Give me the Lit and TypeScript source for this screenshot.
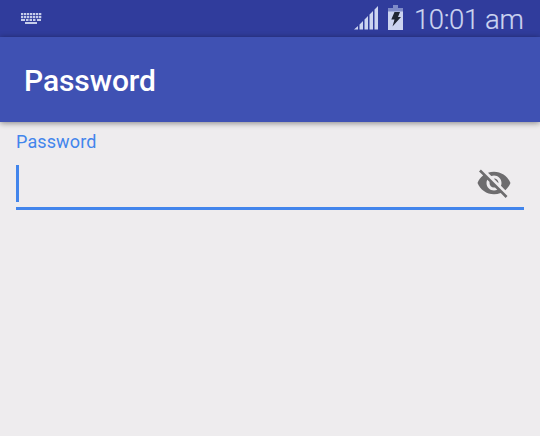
import { LitElement, html, css, svg } from "lit";
import { customElement } from "lit/decorators.js";

const keyRows = [
  { y: 0, keys: [0, 3, 6, 9, 12, 15, 18] },
  { y: 3, keys: [0, 3, 6, 9, 12, 15, 18] },
];

@customElement("status-bar")
class StatusBar extends LitElement {
  static styles = css`
    :host {
      display: flex;
      align-items: center;
      box-sizing: border-box;
      height: 37px;
      padding: 0 16px 0 21px;
      background: #303c9c;
      color: #ccd4f0;
      font-family: Roboto, sans-serif;
    }
    svg { display: block; flex: none; }
    .signal { margin-left: auto; margin-bottom: 1px; }
    .battery { margin-left: 9px; margin-bottom: 2px; }
    .clock {
      margin-left: 11px;
      width: 110px;
      font-size: 27.500px;
      line-height: 37px;
      font-weight: 300;
      letter-spacing: -0.4px;
      white-space: nowrap;
      padding-top: 1px;
      -webkit-text-stroke: 0.2px #ccd4f0;
    }
  `;
  render() {
    return html`
      <svg class="keyboard" width="21" height="12" viewBox="0 0 21 12" fill="#c6cdea">
        ${keyRows.map((r) => r.keys.map((x) => svg`<rect x=${x} y=${r.y} width="2.3" height="2.2"/>`))}
        <path d="M0 6h4v2H0zM5 6h2.500v2H5zM8.500 6H11v2H8.500zM12 6h2.500v2H12zM16 6h4v2h-4zM4 9h12v2H4z"/>
      </svg>
      <svg class="signal" width="25" height="24" viewBox="0 0 25 24" fill="#ccd4f0">
        <path d="M0 23.500L4 20v3.500zM5.500 18.500L9 15v8.500H5.500zM10.500 13.500L14 10v13.500h-3.500zM15.500 8.500L19 5v18.500h-3.500zM20.500 3.500L24 0v23.500h-3.500z"/>
      </svg>
      <svg class="battery" width="15" height="25" viewBox="0 0 15 25">
        <path fill="#7f8bc8" d="M5 0h5v3h5v4H0V3h5z"/>
        <path fill="#ccd4f0" d="M0 6.500h15V25H0z"/>
        <path fill="#202633" d="M6.500 7H12l-2 5h3L4.500 21.500l2-7H3.300z"/>
      </svg>
      <div class="clock">10:01 am</div>
    `;
  }
}

@customElement("password-field")
class PasswordField extends LitElement {
  static styles = css`
    :host {
      display: block;
      padding: 9px 16px 0;
      font-family: Roboto, sans-serif;
    }
    .label {
      color: #4285ec;
      font-size: 18px;
      line-height: 22px;
      letter-spacing: 0.12px;
    }
    .input {
      display: flex;
      justify-content: space-between;
      box-sizing: border-box;
      height: 57px;
      padding: 12px 12px 0 0;
      border-bottom: 3px solid #4285ec;
    }
    .caret { width: 3px; height: 37px; background: #4285ec; }
    svg { display: block; }
  `;
  render() {
    return html`
      <div class="label">Password</div>
      <div class="input">
        <div class="caret"></div>
        <svg width="36" height="36" viewBox="0 0 24 24" fill="#6d6c6e">
          <path d="M12 7c2.760 0 5 2.240 5 5 0 .65-.13 1.260-.36 1.830l2.920 2.920c1.510-1.260 2.700-2.890 3.430-4.750-1.730-4.390-6-7.500-11-7.500-1.400 0-2.740.25-3.980.7l2.160 2.160C10.740 7.130 11.350 7 12 7zM2 4.270l2.280 2.280.46.46C3.080 8.300 1.780 10.020 1 12c1.730 4.390 6 7.500 11 7.500 1.550 0 3.030-.3 4.380-.84l.42.42L19.730 22 21 20.730 3.270 3 2 4.270zM7.530 9.800l1.550 1.550c-.05.21-.08.43-.08.65 0 1.660 1.340 3 3 3 .22 0 .44-.03.65-.08l1.550 1.550c-.67.33-1.410.53-2.200.53-2.760 0-5-2.240-5-5 0-.79.2-1.530.53-2.200zm4.310-.78l3.150 3.150.02-.16c0-1.660-1.340-3-3-3l-.17.01z"/>
        </svg>
      </div>
    `;
  }
}

@customElement("app-root")
class AppRoot extends LitElement {
  static styles = css`
    :host {
      display: block;
      height: 436px;
      overflow: hidden;
      background: #eeecee;
      font-family: Roboto, sans-serif;
    }
    .toolbar {
      box-sizing: border-box;
      height: 85px;
      padding: 2px 24px 0;
      background: #3f51b3;
      color: #fff;
      font-size: 30px;
      font-weight: 500;
      line-height: 84px;
      letter-spacing: -0.08px;
      box-shadow: 0 1px 6px rgba(0, 0, 0, 0.45);
    }
  `;
  render() {
    return html`
      <status-bar></status-bar>
      <div class="toolbar">Password</div>
      <password-field></password-field>
    `;
  }
}
